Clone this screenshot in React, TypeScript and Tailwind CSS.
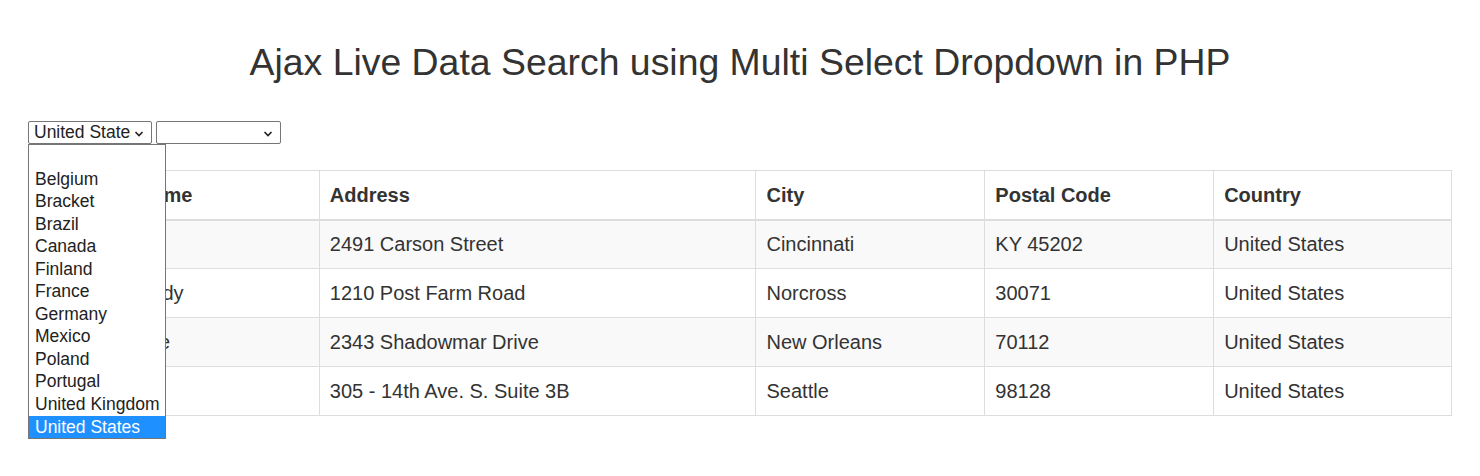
const OPTIONS = [
  "",
  "Belgium",
  "Bracket",
  "Brazil",
  "Canada",
  "Finland",
  "France",
  "Germany",
  "Mexico",
  "Poland",
  "Portugal",
  "United Kingdom",
  "United States",
];

const ROWS = [
  ["Sarah Green", "2491 Carson Street", "Cincinnati", "KY 45202", "United States"],
  ["Rebecca Moody", "1210 Post Farm Road", "Norcross", "30071", "United States"],
  ["Michael Moore", "2343 Shadowmar Drive", "New Orleans", "70112", "United States"],
  ["Paul Jones", "305 - 14th Ave. S. Suite 3B", "Seattle", "98128", "United States"],
];

const HEADERS = ["Customer Name", "Address", "City", "Postal Code", "Country"];

function Chevron() {
  return (
    <svg width="10" height="6" viewBox="0 0 10 6" className="shrink-0 mt-[3px]">
      <path d="M1.5 1 L5 4.6 L8.5 1" fill="none" stroke="#222" strokeWidth="1.6" />
    </svg>
  );
}

function FakeSelect({ value, width }: { value: string; width: string }) {
  return (
    <div
      className={`${width} h-[23px] border border-[#767676] rounded-[2px] bg-white flex items-center pl-[5px] pr-[7px] text-[17.5px] leading-[21px] text-[#222]`}
    >
      <span className="w-[97px] overflow-hidden whitespace-nowrap">{value}</span>
      <span className="ml-auto">
        <Chevron />
      </span>
    </div>
  );
}

export default function App() {
  return (
    <div className="min-h-screen bg-white text-[#333] font-['Liberation_Sans',Arial,sans-serif]">
      <h1 className="pt-[42px] text-center text-[37.4px] leading-[40px] font-normal">
        Ajax Live Data Search using Multi Select Dropdown in PHP
      </h1>

      <div className="px-[28px] mt-[39px]">
        <div className="relative flex gap-[4px]">
          <FakeSelect value="United States" width="w-[124px]" />
          <FakeSelect value="" width="w-[125px]" />

          {/* open dropdown list */}
          <div className="absolute left-0 top-[23px] z-10 w-[138px] border border-[#767676] bg-white text-[17.5px] text-[#222]">
            {OPTIONS.map((opt, i) => (
              <div
                key={i}
                className={`h-[22.55px] leading-[22.55px] pl-[6px] whitespace-nowrap ${
                  opt === "United States" ? "bg-[#1e90ff] text-white" : ""
                }`}
              >
                {opt}
              </div>
            ))}
          </div>
        </div>

        <table className="mt-[26px] w-[1424px] border-collapse border border-[#ddd] text-[20px]">
          <colgroup>
            <col className="w-[291px]" />
            <col className="w-[437px]" />
            <col className="w-[229px]" />
            <col className="w-[229px]" />
            <col className="w-[238px]" />
          </colgroup>
          <thead>
            <tr>
              {HEADERS.map((h) => (
                <th
                  key={h}
                  className="h-[49px] border border-[#ddd] border-b-2 px-[10px] text-left font-bold leading-[28px]"
                >
                  {h}
                </th>
              ))}
            </tr>
          </thead>
          <tbody>
            {ROWS.map((row, i) => (
              <tr key={i} className={i % 2 === 0 ? "bg-[#f9f9f9]" : "bg-white"}>
                {row.map((cell, j) => (
                  <td
                    key={j}
                    className="h-[49px] border border-[#ddd] px-[10px] leading-[28px] whitespace-nowrap"
                  >
                    {cell}
                  </td>
                ))}
              </tr>
            ))}
          </tbody>
        </table>
      </div>
    </div>
  );
}
